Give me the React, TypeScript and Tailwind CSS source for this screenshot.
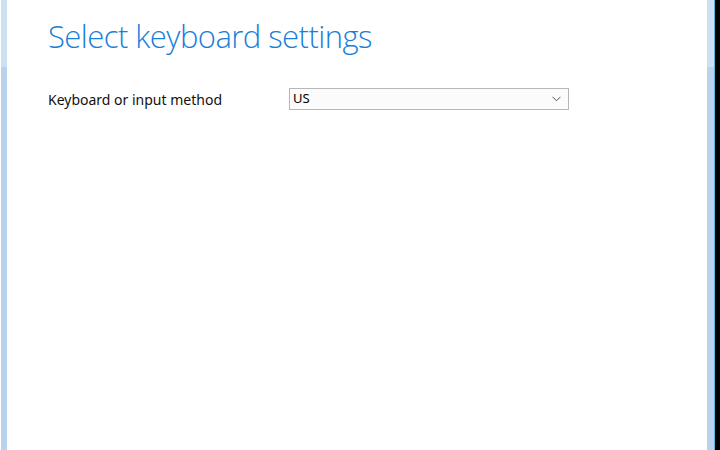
import React from "react";

export default function App() {
  return (
    <div className="flex h-[450px] w-[720px] bg-white overflow-hidden">
      <div className="w-[1px] bg-white" />
      <div className="flex w-[6px] flex-col">
        <div className="h-[67px] bg-[#cddff2]" />
        <div className="flex-1 bg-[#bad3ed]" />
      </div>
      <div className="flex-1 bg-white pl-[41px] pt-[15px]">
        <h1
          className="text-[31px] font-light leading-[43px] text-[#1a7fd8] tracking-[-0.55px]"
          style={{ fontFamily: '"Open Sans", "Noto Sans", sans-serif' }}
        >
          Select keyboard settings
        </h1>
        <div className="mt-[30px] flex items-center">
          <div
            className="w-[241px] text-[14px] text-[#111]"
            style={{ fontFamily: '"Noto Sans", "Open Sans", sans-serif' }}
          >
            Keyboard or input method
          </div>
          <div className="flex h-[22px] w-[280px] items-center justify-between border border-[#b7b7b7] bg-[#fbfbfb] pl-[3px] pr-[7px]">
            <span
              className="text-[13px] text-black"
              style={{ fontFamily: '"Noto Sans", "Open Sans", sans-serif' }}
            >
              US
            </span>
            <svg width="9" height="6" viewBox="0 0 9 6">
              <path d="M0.5 0.8 L4.5 4.8 L8.5 0.8" fill="none" stroke="#555" strokeWidth="1" />
            </svg>
          </div>
        </div>
      </div>
      <div className="flex w-[7px] flex-col">
        <div className="h-[67px] bg-[#cde0f2]" />
        <div className="flex-1 bg-[#bad3ed]" />
      </div>
      <div className="w-[1px] bg-[#5ab4dc]" />
      <div className="w-[5px] bg-black" />
    </div>
  );
}
